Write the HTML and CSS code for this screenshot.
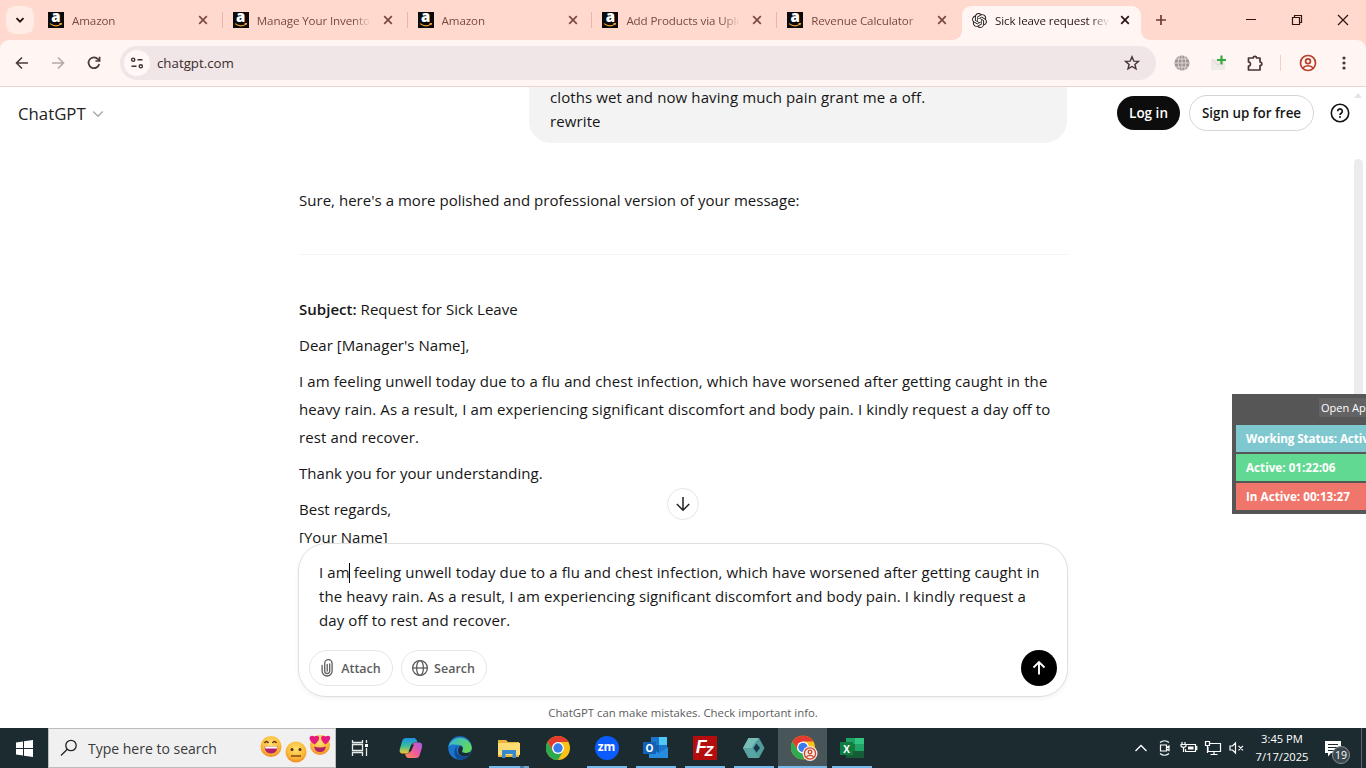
FILE: index.html
```html
<!DOCTYPE html>
<html lang="en">
<head>
    <meta charset="UTF-8">
    <meta name="viewport" content="width=device-width, initial-scale=1.0">
    <title>Sick leave request rewrite</title>
    <link rel="stylesheet" href="styles.css">
</head>
<body>
    <svg class="defs" width="0" height="0">
        <symbol id="x" viewBox="0 0 10 10"><path d="M1.2 1.2l7.6 7.6M8.8 1.2L1.2 8.8" stroke="currentColor" stroke-width="1.7" fill="none"/></symbol>
        <symbol id="smile" viewBox="0 0 16 4"><path d="M2 .6Q8 5 13 .8M11.500 .4l2 0-.6 1.800" stroke="#f0a030" stroke-width="1.100" fill="none"/></symbol>
        <symbol id="chrome" viewBox="0 0 24 24">
            <circle cx="12" cy="12" r="12" fill="#fbc116"/>
            <path d="M12 6h10.400A12 12 0 0 0 1.600 6L6.800 15z" fill="#e33b2e"/>
            <path d="M1.600 6A12 12 0 0 0 12 24l5.200-9-5.200-3-5.200 3z" fill="#2da94f"/>
            <circle cx="12" cy="12" r="6" fill="#fff"/>
            <circle cx="12" cy="12" r="4.700" fill="#3a7cec"/>
        </symbol>
    </svg>

    <!-- Tab strip -->
    <div class="tabstrip">
        <button class="tab-search"><svg width="10" height="10" viewBox="0 0 10 10"><path d="M1.500 3.200L5 6.700l3.500-3.500" stroke="#28100c" stroke-width="1.800" fill="none"/></svg></button>
        <div class="tab"><span class="amz">a<svg><use href="#smile"/></svg></span><span class="tab-title">Amazon</span><svg class="close"><use href="#x"/></svg></div>
        <div class="tab"><span class="amz">a<svg><use href="#smile"/></svg></span><span class="tab-title">Manage Your Inventory</span><svg class="close"><use href="#x"/></svg></div>
        <div class="tab"><span class="amz">a<svg><use href="#smile"/></svg></span><span class="tab-title">Amazon</span><svg class="close"><use href="#x"/></svg></div>
        <div class="tab"><span class="amz">a<svg><use href="#smile"/></svg></span><span class="tab-title">Add Products via Upload</span><svg class="close"><use href="#x"/></svg></div>
        <div class="tab last"><span class="amz">a<svg><use href="#smile"/></svg></span><span class="tab-title">Revenue Calculator</span><svg class="close"><use href="#x"/></svg></div>
        <div class="tab active">
            <svg class="gpt" width="15" height="15" viewBox="0 0 24 24"><path fill="#222" d="M22.2819 9.8211a5.9847 5.9847 0 0 0-.5157-4.9108 6.0462 6.0462 0 0 0-6.5098-2.9A6.0651 6.0651 0 0 0 4.9807 4.1818a5.9847 5.9847 0 0 0-3.9977 2.9 6.0462 6.0462 0 0 0 .7427 7.0966 5.98 5.98 0 0 0 .511 4.9107 6.051 6.051 0 0 0 6.5146 2.9001A5.9847 5.9847 0 0 0 13.2599 24a6.0557 6.0557 0 0 0 5.7718-4.2058 5.9894 5.9894 0 0 0 3.9977-2.9001 6.0557 6.0557 0 0 0-.7475-7.0729zm-9.022 12.6081a4.4755 4.4755 0 0 1-2.8764-1.0408l.1419-.0804 4.7783-2.7582a.7948.7948 0 0 0 .3927-.6813v-6.7369l2.02 1.1686a.071.071 0 0 1 .038.052v5.5826a4.504 4.504 0 0 1-4.4945 4.4944zm-9.6607-4.1254a4.4708 4.4708 0 0 1-.5346-3.0137l.142.0852 4.783 2.7582a.7712.7712 0 0 0 .7806 0l5.8428-3.3685v2.3324a.0804.0804 0 0 1-.0332.0615L9.74 19.9502a4.4992 4.4992 0 0 1-6.1408-1.6464zM2.3408 7.8956a4.485 4.485 0 0 1 2.3655-1.9728V11.6a.7664.7664 0 0 0 .3879.6765l5.8144 3.3543-2.0201 1.1685a.0757.0757 0 0 1-.071 0l-4.8303-2.7865A4.504 4.504 0 0 1 2.3408 7.872zm16.5963 3.8558L13.1038 8.364 15.1192 7.2a.0757.0757 0 0 1 .071 0l4.8303 2.7913a4.4944 4.4944 0 0 1-.6765 8.1042v-5.6772a.79.79 0 0 0-.407-.667zm2.0107-3.0231l-.142-.0852-4.7735-2.7818a.7759.7759 0 0 0-.7854 0L9.409 9.2297V6.8974a.0662.0662 0 0 1 .0284-.0615l4.8303-2.7866a4.4992 4.4992 0 0 1 6.6802 4.66zM8.3065 12.863l-2.02-1.1638a.0804.0804 0 0 1-.038-.0567V6.0742a4.4992 4.4992 0 0 1 7.3757-3.4537l-.142.0805L8.704 5.459a.7948.7948 0 0 0-.3927.6813zm1.0976-2.3654l2.602-1.4998 2.6069 1.4998v2.9994l-2.5974 1.4997-2.6067-1.4997Z"/></svg>
            <span class="tab-title">Sick leave request rewrite</span><svg class="close"><use href="#x"/></svg>
        </div>
        <svg class="new-tab" width="12" height="12" viewBox="0 0 12 12"><path d="M6 1v10M1 6h10" stroke="#6e3b31" stroke-width="1.700"/></svg>
        <div class="win-controls">
            <svg width="46" height="40" viewBox="0 0 46 40"><path d="M18 19.500h10" stroke="#32140e"/></svg>
            <svg width="46" height="40" viewBox="0 0 46 40"><path d="M18.500 17.500h7v7h-7zM20.500 17.500v-2h7v7h-2" stroke="#32140e" stroke-width="1.200" fill="none"/></svg>
            <svg width="46" height="40" viewBox="0 0 46 40"><path d="M18 15l10 10M28 15L18 25" stroke="#32140e" stroke-width="1.200"/></svg>
        </div>
    </div>

    <!-- Toolbar -->
    <div class="toolbar">
        <div class="nav">
            <svg width="20" height="20" viewBox="0 0 20 20"><path d="M16 10H4.500M10 4.500L4.500 10l5.500 5.500" stroke="#4b3a38" stroke-width="1.600" fill="none"/></svg>
            <svg width="20" height="20" viewBox="0 0 20 20"><path d="M4 10h11.500M10 4.500l5.500 5.500-5.500 5.500" stroke="#b5a9a8" stroke-width="1.600" fill="none"/></svg>
            <svg width="20" height="20" viewBox="0 0 20 20"><path d="M15.200 11A5.400 5.400 0 1 1 14 6.200l1 1M15.600 3.800v4.200h-4.200" stroke="#4b3a38" stroke-width="1.700" fill="none"/></svg>
        </div>
        <div class="omnibox">
            <span class="site-info"><svg width="14" height="14" viewBox="0 0 14 14"><path d="M7.500 3.700h5M1.500 10.300h5" stroke="#3d3231" stroke-width="1.600"/><circle cx="3.200" cy="3.700" r="1.600" stroke="#3d3231" stroke-width="1.400" fill="none"/><circle cx="10.800" cy="10.300" r="1.600" stroke="#3d3231" stroke-width="1.400" fill="none"/></svg></span>
            <span class="url">chatgpt.com</span>
            <svg width="16" height="16" viewBox="0 0 16 16"><path d="M8 1.800l1.800 4.300 4.600.3-3.500 3 1.100 4.500L8 11.500l-4 2.400 1.100-4.500-3.500-3 4.600-.3z" stroke="#463534" stroke-width="1.400" fill="none"/></svg>
        </div>
        <div class="extensions">
            <svg class="ext-globe" width="16" height="16" viewBox="0 0 16 16"><circle cx="8" cy="8" r="7.500" fill="#9b9694"/><path d="M.5 8h15M8 .5v15M2 4h12M2 12h12M5.500 1Q2.500 8 5.500 15M10.500 1q3 7 0 14" stroke="#eee2df" stroke-width=".8" fill="none"/></svg>
            <svg class="ext-plus" width="16" height="16" viewBox="0 0 16 16"><path d="M0 4h14v11H0z" fill="#efe9e7"/><path d="M1 5l6 5 6-5" stroke="#ddd8d6" fill="none"/><path d="M10.500 .5v9M6 5h9" stroke="#38a845" stroke-width="2.200"/></svg>
            <svg class="ext-puzzle" width="18" height="18" viewBox="0 0 18 18"><path d="M2.500 4h4.700a1.700 1.700 0 0 1 3.400 0H14v4a1.800 1.800 0 0 1 0 3.600V16H2.500v-3.800c2.600 0 2.600-4.200 0-4.200z" stroke="#493231" stroke-width="1.700" stroke-linejoin="round" fill="none"/></svg>
            <span class="divider"></span>
            <svg class="profile" width="18" height="18" viewBox="0 0 18 18"><g stroke="#b8402a" stroke-width="1.700" fill="none"><circle cx="9" cy="9" r="7.500"/><circle cx="9" cy="7.200" r="2.400"/><path d="M3.800 14c2.400-3 8-3 10.400 0"/></g></svg>
            <svg class="menu" width="4" height="16" viewBox="0 0 4 16"><g fill="#463534"><circle cx="2" cy="3" r="1.600"/><circle cx="2" cy="8" r="1.600"/><circle cx="2" cy="13" r="1.600"/></g></svg>
        </div>
    </div>

    <!-- Page -->
    <div class="page">
        <div class="side-left">
            <span class="brand">ChatGPT</span>
            <svg width="12" height="8" viewBox="0 0 12 8"><path d="M1.200 1.500L6 6.200l4.800-4.700" stroke="#a8a8a8" stroke-width="1.400" fill="none"/></svg>
        </div>

        <main>
            <div class="chat">
                <div class="bubble">cloths wet and now having much pain grant me a off.<br>rewrite</div>
                <div class="answer">
                    <p class="intro">Sure, here's a more polished and professional version of your message:</p>
                    <hr>
                    <p><strong>Subject:</strong> Request for Sick Leave</p>
                    <p>Dear [Manager's Name],</p>
                    <p class="long">I am feeling unwell today due to a flu and chest infection, which have worsened after getting caught in the<br>heavy rain. As a result, I am experiencing significant discomfort and body pain. I kindly request a day off to<br>rest and recover.</p>
                    <p>Thank you for your understanding.</p>
                    <p>Best regards,<br>[Your Name]</p>
                </div>
                <button class="scroll-down"><svg width="16" height="16" viewBox="0 0 16 16"><path d="M8 1v13M1.800 8L8 14.200 14.200 8" stroke="#222" stroke-width="1.500" fill="none"/></svg></button>
            </div>
            <div class="composer">
                <div class="prompt">I am<i class="caret"></i> feeling unwell today due to a flu and chest infection, which have worsened after getting caught in<br>the heavy rain. As a result, I am experiencing significant discomfort and body pain. I kindly request a<br>day off to rest and recover.</div>
                <div class="actions">
                    <button class="pill attach"><svg width="16" height="18" viewBox="0 0 16 18"><path d="M10.700 5v7a2.500 2.500 0 0 1-5 0V4.400a3.700 3.700 0 0 1 7.400 0V12a5 5 0 0 1-10 0V6.500M8.200 5.500V12" stroke="#5d5d5d" stroke-width="1.300" fill="none" stroke-linecap="round"/></svg>Attach</button>
                    <button class="pill"><svg width="18" height="18" viewBox="0 0 18 18"><g stroke="#5d5d5d" stroke-width="1.300" fill="none"><circle cx="9" cy="9" r="7.400"/><ellipse cx="9" cy="9" rx="3.400" ry="7.400"/><path d="M1.600 9h14.800"/></g></svg>Search</button>
                    <button class="send"><svg width="16" height="16" viewBox="0 0 16 16"><path d="M8 14.500V2.300M2.500 7.500L8 2l5.500 5.500" stroke="#fff" stroke-width="1.900" fill="none"/></svg></button>
                </div>
            </div>
            <div class="disclaimer">ChatGPT can make mistakes. Check important info.</div>
        </main>

        <div class="side-right">
            <button class="login">Log in</button>
            <button class="signup">Sign up for free</button>
            <svg class="help" width="20" height="20" viewBox="0 0 20 20"><circle cx="10" cy="10" r="8.700" stroke="#111" stroke-width="1.600" fill="none"/><path d="M7.700 8.200a2.300 2.300 0 1 1 3.500 2c-.8.500-1.200.9-1.200 1.800" stroke="#111" stroke-width="1.600" fill="none"/><circle cx="10" cy="14" r="1" fill="#111"/></svg>
        </div>
        <div class="scroll-arrow"></div>
        <div class="scroll-thumb"></div>
    </div>

    <!-- Taskbar -->
    <div class="taskbar">
        <div class="start"><svg width="17" height="17" viewBox="0 0 17 17"><path d="M0 2.500l7-1v6.500H0zM8 1.300L17 0v8H8zM0 9h7v6.500l-7-1zM8 9h9v8l-9-1.300z" fill="#fff"/></svg></div>
        <div class="search">
            <svg width="18" height="18" viewBox="0 0 18 18"><circle cx="11" cy="6.500" r="5.200" stroke="#222" stroke-width="1.300" fill="none"/><path d="M7.300 10.200L1 16.500" stroke="#222" stroke-width="1.300"/></svg>
            <span class="search-text">Type here to search</span>
            <svg width="72" height="30" viewBox="0 0 72 30">
                <defs><radialGradient id="face" cx=".5" cy=".35" r=".7"><stop offset="0" stop-color="#ffe070"/><stop offset=".6" stop-color="#fbbb38"/><stop offset="1" stop-color="#ee8224"/></radialGradient></defs>
                <circle cx="11" cy="13.500" r="10.500" fill="url(#face)"/>
                <path d="M4.500 10q2-3 4 0M12.500 10q2-3 4 0" stroke="#603010" stroke-width="1.400" fill="none"/>
                <path d="M4.500 13.500h13q-.5 7-6.500 7t-6.500-7z" fill="#b12068"/><path d="M5 13.500h12v2H5.400z" fill="#fff"/>
                <circle cx="36" cy="19" r="10.500" fill="url(#face)"/>
                <circle cx="32" cy="16.500" r="1.500" fill="#503018"/><circle cx="40" cy="16.500" r="1.500" fill="#503018"/><path d="M31 23h10" stroke="#804818" stroke-width="1.500"/>
                <circle cx="60" cy="12" r="10" fill="url(#face)"/>
                <path d="M54.500 11.500C46 6 50 .5 54.500 3.500 59 .5 62 6 54.500 11.500zM65.500 11.500C58 6 61.500 .5 65.500 3.500 70.500 .5 73 6 65.500 11.500z" fill="#e5197e"/>
                <path d="M54 13.500q6 2 12 0-1 5.500-6 5.500t-6-5.500z" fill="#b12068"/>
            </svg>
        </div>
        <div class="app task-view"><svg width="18" height="18" viewBox="0 0 18 18"><path d="M1.500 1v2.500h10V1M1.500 5.500h10v6h-10zM1.500 17v-3.500h10V17M15.500 1v3M15.500 9v8" stroke="#e8eaea" stroke-width="1.300" fill="none"/><path d="M14 5h3v3h-3z" fill="#fff"/></svg></div>
        <div class="app"><svg width="24" height="24" viewBox="0 0 24 24">
            <defs>
                <linearGradient id="cpa" x1="0" y1="0" x2="0" y2="1"><stop offset="0" stop-color="#1f8fe8"/><stop offset=".5" stop-color="#35bd9c"/><stop offset="1" stop-color="#f5c72c"/></linearGradient>
                <linearGradient id="cpb" x1="1" y1="0" x2="0" y2="1"><stop offset="0" stop-color="#a45be8"/><stop offset=".5" stop-color="#ee5a9c"/><stop offset="1" stop-color="#fb8f4b"/></linearGradient>
            </defs>
            <path d="M7 2h8q2.500 0 3.500 4.500h-3q-2.500 0-3.200 2.500l-1.800 6q-.8 2.500-3 2.500H4q-4.500 0-3-5L3.200 5Q4 2 7 2z" fill="url(#cpa)"/>
            <path d="M16 6.500h4q4 0 3 5l-2.200 7q-.8 3.500-3.800 3.500H9.500Q7 22 6 17.500h2.200q2.200 0 3-2.500L13 9q.8-2.500 3-2.500z" fill="url(#cpb)"/>
            <path d="M12.500 8.500h2.500l-3 7H9.500z" fill="#1c2b30"/>
        </svg></div>
        <div class="app"><svg width="24" height="24" viewBox="0 0 24 24">
            <defs>
                <linearGradient id="edga" x1="0" y1="0" x2="1" y2=".5"><stop offset="0" stop-color="#32b5e0"/><stop offset="1" stop-color="#63d85c"/></linearGradient>
            </defs>
            <circle cx="12" cy="12" r="11.800" fill="#1b75cc"/>
            <path d="M.3 11A12 12 0 0 1 23.800 11.500c0 4-3 5.500-6 5.500-3 0-4.500-1.200-3.500-2.500 1.500-2 .7-5.500-3-5.500C6.500 8.500 2.500 7.500 .3 11z" fill="url(#edga)"/>
            <path d="M8.500 14c0 5 5 8 12.500 5.500a12 12 0 0 1-9 4.300C6 23 4 13 10 9.500c-1 1.200-1.500 2.500-1.500 4.500z" fill="#114a94"/>
            <path d="M14.300 14.500q-1.200 2.500 3.500 2.500c3 0 4.600-.8 5.200-2.200q-.4 2.500-2 4.700c-6 2-10.500 0-11-4.500 0-3 1.300-5 3-5q2.700 1.500 1.300 4.500z" fill="#1c2b30"/>
        </svg></div>
        <div class="app running stacked"><svg width="24" height="24" viewBox="0 0 24 24"><path d="M1 4h8l2 2h11v15H1z" fill="#e9b53b"/><path d="M1 7h22v12H1z" fill="#ffdb74"/><path d="M5 14h14v8h-3.500v-4h-7v4H5z" fill="#3789cf"/></svg></div>
        <div class="app"><svg width="24" height="24"><use href="#chrome"/></svg></div>
        <div class="app running"><span class="zoom">zm</span></div>
        <div class="app running"><svg width="26" height="24" viewBox="0 0 26 24"><path d="M8 1h16v16H8z" fill="#1b75cc"/><path d="M16 1h8v8h-8z" fill="#50c8f5"/><path d="M8 9h8v8H8z" fill="#1260ad"/><path d="M6 22V11l10 6 9-6v11z" fill="#278be0"/><path d="M0 6h13v12H0z" fill="#1062b8"/><text x="6.500" y="15.800" text-anchor="middle" class="letter">O</text></svg></div>
        <div class="app running"><span class="fz">F<sub>Z</sub></span></div>
        <div class="app running"><svg width="24" height="24" viewBox="0 0 24 24"><path d="M6.500 2h10.500l5.500 10L17 22H6.500L1 12z" fill="#4f9c9c"/><path d="M6.500 2h10.500l-5 6-2 4H1z" fill="#79bdb9"/><path d="M1 12h9l2 4 5 6H6.500z" fill="#5aa5a3"/><path d="M14.500 7.500l3.500 4.500-3.500 4.500-3-4.500z" fill="#16364a"/></svg></div>
        <div class="app running current"><svg width="28" height="28" viewBox="0 0 28 28"><svg width="24" height="24" x="0" y="1.500"><use href="#chrome"/></svg><circle cx="19" cy="19.500" r="7.500" fill="#fbe4dd"/><g stroke="#c9472c" stroke-width="1.300" fill="none"><circle cx="19" cy="19.500" r="5.600"/><circle cx="19" cy="18" r="1.800"/><path d="M15.500 23c1.500-2.300 5.500-2.300 7 0"/></g></svg></div>
        <div class="app running"><svg width="24" height="24" viewBox="0 0 24 24"><path d="M6 2h18v20H6z" fill="#21a366"/><path d="M15 2h9v6h-9z" fill="#33c481"/><path d="M6 8h9v14H6z" fill="#107c41"/><path d="M6 15h18v7H6z" fill="#185c37"/><path d="M0 6h13v13H0z" fill="#107c41"/><text x="6.500" y="16.500" text-anchor="middle" class="letter">X</text></svg></div>
        <div class="tray">
            <svg width="14" height="10" viewBox="0 0 14 10"><path d="M1.500 8L7 2.500 12.500 8" stroke="#fff" stroke-width="1.300" fill="none"/></svg>
            <svg width="14" height="18" viewBox="0 0 14 18"><path d="M2.500 6h6v6h-6zM8.500 8.500l2.500-1.500v4.500l-2.500-1.500M2 3.500q4.500-3.500 9 0M2 14.500q4.500 3.500 9 0" stroke="#fff" stroke-width="1.200" fill="none"/></svg>
            <svg width="18" height="14" viewBox="0 0 18 14"><path d="M6 3.500h9.500v7H5.500V8M15.500 5.500h1.300v3h-1.300M2 1v2.500M5 1v2.500M1 3.500h5v1.500q-2.500 2.800-5 0zM3.500 6.500V11" stroke="#fff" stroke-width="1.200" fill="none"/><path d="M8 5.500h5.500v3H8z" fill="#fff"/></svg>
            <svg width="18" height="16" viewBox="0 0 18 16"><path d="M6 3.500h10.500v8H4V7M10 11.500v3M6.500 14.500h7M1.500 1.500h4v4h-4zM3.500 5.500V13" stroke="#fff" stroke-width="1.200" fill="none"/></svg>
            <svg width="16" height="14" viewBox="0 0 16 14"><path d="M1 5h2.500L6.500 2v10l-3-3H1zM9.500 4.800l4.500 4.500M14 4.800L9.500 9.300" stroke="#fff" stroke-width="1.200" fill="none"/></svg>
        </div>
        <div class="clock">3:45 PM<br>7/17/2025</div>
        <div class="notify">
            <svg width="18" height="17" viewBox="0 0 18 17"><path d="M1 1h16v12H7l-3 3.500V13H1z" fill="#fff"/><path d="M4 4.500h10M4 7.500h10M4 10.500h6" stroke="#1c2b30"/></svg>
            <span class="badge">19</span>
        </div>
        <div class="show-desktop"></div>
    </div>

    <!-- Time tracker widget -->
    <div class="tracker">
        <div class="tracker-top"><span>Open App</span></div>
        <div class="row status">Working Status: Active</div>
        <div class="row on">Active: 01:22:06</div>
        <div class="row off">In Active: 00:13:27</div>
    </div>
</body>
</html>
```

FILE: styles.css
```css
* {
    box-sizing: border-box;
}
body {
    margin: 0;
    width: 1366px;
    height: 768px;
    display: flex;
    flex-direction: column;
    position: relative;
    overflow: hidden;
    font-family: "Open Sans", "Noto Sans", sans-serif;
    background: #ffd9cd;
}
button {
    font-family: inherit;
    padding: 0;
    border: none;
    display: flex;
    align-items: center;
    justify-content: center;
}
svg {
    flex: none;
}
.defs {
    position: absolute;
}
/* Tab strip */
.tabstrip {
    height: 40px;
    flex: none;
    display: flex;
    align-items: center;
    padding-left: 6px;
    background: #ffd9cd;
}
.tab-search {
    width: 28px;
    height: 28px;
    border-radius: 9px;
    background: #ffece6;
    margin-right: 4px;
}
.tab {
    width: 184.800px;
    height: 34px;
    flex: none;
    display: flex;
    align-items: center;
    padding-left: 10px;
    color: #7a4a40;
    position: relative;
}
.tab::after {
    content: "";
    position: absolute;
    right: 0;
    top: 9px;
    width: 1px;
    height: 16px;
    background: #f0b3a3;
}
.tab.last::after {
    display: none;
}
.tab-title {
    width: 114px;
    margin-left: 8px;
    font-size: 11.600px;
    letter-spacing: -0.120px;
    white-space: nowrap;
    overflow: hidden;
    mask-image: linear-gradient(90deg, #000 96px, transparent 114px);
}
.close {
    width: 10px;
    height: 10px;
    margin-left: 12px;
}
.amz {
    width: 16px;
    height: 16px;
    background: #0b0a0a;
    color: #fff;
    font-size: 15px;
    font-weight: 800;
    line-height: 9px;
    text-align: center;
}
.amz svg {
    display: block;
    width: 16px;
    height: 4px;
    margin-top: 2px;
}
.tab.active {
    width: 179px;
    height: 34px;
    align-self: flex-end;
    border-radius: 9px 9px 0 0;
    background: #fff5f2;
    color: #2a1512;
    padding-bottom: 6px;
    margin-right: 14px;
}
.tab.active .close {
    margin-left: 11px;
}
.tab.active::before,
.tab.active::after {
    content: "";
    position: absolute;
    display: block;
    top: auto;
    bottom: 0;
    width: 9px;
    height: 9px;
}
.tab.active::before {
    left: -9px;
    background: radial-gradient(circle at 0 0, transparent 8.500px, #fff5f2 9px);
}
.tab.active::after {
    right: -9px;
    background: radial-gradient(circle at 100% 0, transparent 8.500px, #fff5f2 9px);
}
.win-controls {
    display: flex;
    margin-left: auto;
}
/* Toolbar */
.toolbar {
    height: 47px;
    flex: none;
    display: flex;
    align-items: center;
    background: #fff5f2;
    border-bottom: 1px solid #ecd5d0;
    border-radius: 9px 9px 0 0;
}
.nav {
    display: flex;
    gap: 16px;
    width: 120px;
    padding-left: 12px;
}
.omnibox {
    width: 1036px;
    height: 34px;
    border-radius: 17px;
    background: #f1e6e7;
    display: flex;
    align-items: center;
    padding: 0 16px 0 4px;
}
.site-info {
    width: 26px;
    height: 26px;
    border-radius: 50%;
    background: #fff8f6;
    display: flex;
    align-items: center;
    justify-content: center;
}
.url {
    flex: 1;
    margin-left: 7px;
    font-size: 13.300px;
    color: #3a2b2a;
}
.extensions {
    display: flex;
    align-items: center;
}
.ext-globe {
    margin-left: 18px;
}
.ext-plus {
    margin-left: 21px;
}
.ext-puzzle {
    margin-left: 19px;
}
.divider {
    width: 1px;
    height: 16px;
    margin-left: 16px;
    background: #f4cfc6;
}
.profile {
    margin-left: 18px;
}
.menu {
    margin-left: 25px;
}
/* Page */
.page {
    height: 641px;
    flex: none;
    display: flex;
    position: relative;
    background: #fff;
    color: #161616;
}
.side-left {
    width: 298px;
    height: 53px;
    display: flex;
    align-items: center;
    padding-left: 18px;
    gap: 6px;
}
.brand {
    font-size: 16.800px;
    color: #222;
}
main {
    width: 770px;
    display: flex;
    flex-direction: column;
    font-size: 15px;
}
.chat {
    height: 456px;
    padding: 0 1px;
    position: relative;
    overflow: hidden;
}
/* scrolled partly under the toolbar */
.bubble {
    width: 538px;
    height: 58px;
    margin: -2px 0 0 auto;
    padding: 0 21px;
    border-radius: 0 0 22px 22px;
    background: #f3f3f3;
    line-height: 24px;
    letter-spacing: 0.110px;
}
.answer {
    line-height: 28px;
    letter-spacing: 0.030px;
    padding-top: 43px;
}
p {
    margin: 0 0 8px;
    white-space: nowrap;
}
.answer .intro {
    margin: 0;
}
.long {
    letter-spacing: 0.100px;
}
hr {
    border: none;
    height: 1px;
    margin: 40px 0;
    background: #f3f3f3;
}
strong {
    font-weight: 600;
}
.scroll-down {
    position: absolute;
    left: 369px;
    bottom: 23px;
    width: 32px;
    height: 32px;
    border-radius: 50%;
    border: 1px solid #e6e6e6;
    background: #fff;
}
.composer {
    height: 154px;
    display: flex;
    flex-direction: column;
    justify-content: space-between;
    padding: 16px 10px 10px;
    border: 1px solid #dfdfdf;
    border-radius: 28px;
    background: #fff;
    box-shadow: 0 2px 5px rgba(0, 0, 0, 0.05);
}
.prompt {
    padding-left: 10px;
    line-height: 24px;
    letter-spacing: 0.095px;
    white-space: nowrap;
}
.caret {
    display: inline-block;
    width: 1px;
    height: 20px;
    margin-left: -1px;
    vertical-align: -5px;
    background: #000;
}
.actions {
    display: flex;
    gap: 8px;
}
.pill {
    width: 86px;
    height: 36px;
    gap: 5px;
    padding-right: 2px;
    border: 1px solid #e5e5e5;
    border-radius: 18px;
    background: #fff;
    color: #5d5d5d;
    font-size: 12.500px;
    font-weight: 600;
}
.pill.attach {
    width: 84px;
    gap: 6px;
}
.send {
    width: 36px;
    height: 36px;
    margin-left: auto;
    border-radius: 50%;
    background: #000;
}
.disclaimer {
    margin-top: 8px;
    text-align: center;
    font-size: 11.350px;
    line-height: 16px;
    color: #5d5d5d;
}
.side-right {
    display: flex;
    align-items: center;
    height: 52px;
    padding-left: 49px;
}
.login {
    width: 63px;
    height: 34px;
    border-radius: 17px;
    background: #0d0d0d;
    color: #fff;
    font-size: 13.500px;
    font-weight: 600;
}
.signup {
    width: 125px;
    height: 36px;
    margin: 0 16px 0 9px;
    border: 1px solid #d5d5d5;
    border-radius: 18px;
    background: #fff;
    color: #161616;
    font-size: 13.400px;
    font-weight: 600;
}
.scroll-arrow {
    position: absolute;
    right: 4px;
    top: 6px;
    border: 4px solid transparent;
    border-top: none;
    border-bottom: 5px solid #e4e4e4;
}
.scroll-thumb {
    position: absolute;
    right: 3px;
    top: 72px;
    width: 9px;
    height: 260px;
    border-radius: 5px;
    background: #ececec;
}
/* Taskbar */
.taskbar {
    height: 40px;
    flex: none;
    display: flex;
    align-items: stretch;
    background: #1c2b30;
    color: #fff;
}
.start {
    width: 48px;
    display: flex;
    align-items: center;
    justify-content: center;
}
.search {
    width: 288px;
    display: flex;
    align-items: center;
    padding-left: 11px;
    border: 1px solid #bdbdbd;
    background: #f0f0f0;
    color: #3a3a3a;
}
.search-text {
    width: 172px;
    margin-left: 10px;
    font-size: 14px;
    white-space: nowrap;
}
.app {
    width: 49px;
    display: flex;
    align-items: center;
    justify-content: center;
    position: relative;
}
.task-view {
    width: 50px;
    padding-right: 2px;
}
.running::after {
    content: "";
    position: absolute;
    left: 5px;
    bottom: 0;
    width: 40px;
    height: 2px;
    background: #76b9ed;
}
.stacked::after {
    background: linear-gradient(90deg, #76b9ed 31px, #4d7c9c 31px, #4d7c9c 35px, #6ba6d3 35px);
}
.current {
    padding-left: 4px;
    background: #485559;
}
.current::after {
    left: 0;
    width: 49px;
}
.zoom {
    width: 24px;
    height: 24px;
    border-radius: 50%;
    background: #0b5cff;
    font-size: 12px;
    font-weight: 700;
    line-height: 21px;
    text-align: center;
}
.letter {
    fill: #fff;
    font-size: 10px;
    font-weight: 700;
}
.fz {
    width: 24px;
    height: 24px;
    background: #b50d0d;
    font-family: "Liberation Sans", sans-serif;
    font-size: 18px;
    font-style: italic;
    font-weight: 700;
    line-height: 22px;
    text-align: center;
}
.fz sub {
    font-size: 14px;
    line-height: 0;
    vertical-align: -3px;
    margin-left: -2px;
}
.tray {
    margin-left: auto;
    display: grid;
    grid-template-columns: repeat(5, 24px);
    align-items: center;
    justify-items: center;
}
.clock {
    width: 66px;
    padding-top: 2px;
    font-size: 11.200px;
    line-height: 18px;
    text-align: center;
}
.notify {
    width: 46px;
    display: flex;
    align-items: center;
    padding-left: 9px;
    position: relative;
}
.badge {
    position: absolute;
    left: 17px;
    top: 18px;
    width: 18px;
    height: 18px;
    border-radius: 50%;
    border: 1px solid #8a9296;
    background: #3b474c;
    font-size: 10.500px;
    line-height: 16px;
    text-align: center;
}
.show-desktop {
    width: 5px;
    border-left: 1px solid #59656a;
}
/* Tracker widget */
.tracker {
    position: absolute;
    left: 1232px;
    top: 394px;
    width: 180px;
    height: 120px;
    padding: 0 4px;
    background: #565656;
    color: #fff;
}
.tracker-top {
    height: 31px;
    padding: 4px 0 0 83px;
    font-size: 11px;
}
.tracker-top span {
    display: block;
    padding-left: 2px;
    line-height: 19px;
    background: #636363;
}
.row {
    height: 27px;
    margin-bottom: 2px;
    padding-left: 10px;
    font-size: 11.700px;
    font-weight: 700;
    line-height: 27px;
    white-space: nowrap;
}
.status {
    background: #7fc8cf;
    letter-spacing: -0.100px;
}
.on {
    background: #62d993;
}
.off {
    background: #f0766b;
}
```
